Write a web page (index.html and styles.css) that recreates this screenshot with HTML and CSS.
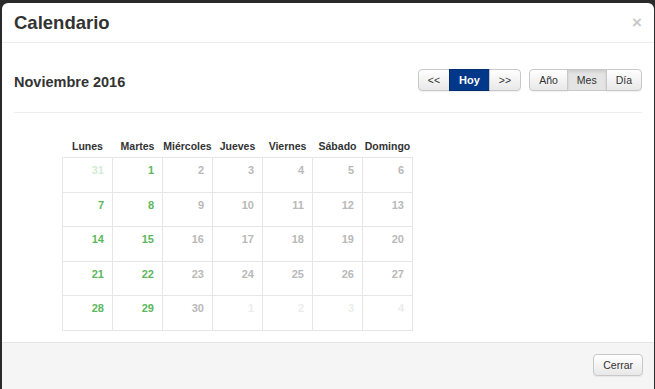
FILE: index.html
```html
<!DOCTYPE html>
<html>
<head>
  <meta charset="utf-8">
  <title>Calendario</title>
  <link rel="stylesheet" href="styles.css">
</head>
<body>
  <div class="modal">
    <header class="modal-header">
      <h3>Calendario</h3>
      <span class="close">&times;</span>
    </header>
    <div class="modal-body">
      <div class="toolbar">
        <h4>Noviembre 2016</h4>
        <div class="groups">
          <div class="btn-group">
            <button type="button" class="btn">&lt;&lt;</button>
            <button type="button" class="btn primary">Hoy</button>
            <button type="button" class="btn">&gt;&gt;</button>
          </div>
          <div class="btn-group">
            <button type="button" class="btn">Año</button>
            <button type="button" class="btn active">Mes</button>
            <button type="button" class="btn">Día</button>
          </div>
        </div>
      </div>
      <hr class="rule">
      <table class="calendar">
        <thead>
          <tr>
            <th>Lunes</th><th>Martes</th><th>Miércoles</th><th>Jueves</th><th>Viernes</th><th>Sábado</th><th>Domingo</th>
          </tr>
        </thead>
        <tbody>
          <tr>
            <td class="event out">31</td><td class="event">1</td><td>2</td><td>3</td><td>4</td><td>5</td><td>6</td>
          </tr>
          <tr>
            <td class="event">7</td><td class="event">8</td><td>9</td><td>10</td><td>11</td><td>12</td><td>13</td>
          </tr>
          <tr>
            <td class="event">14</td><td class="event">15</td><td>16</td><td>17</td><td>18</td><td>19</td><td>20</td>
          </tr>
          <tr>
            <td class="event">21</td><td class="event">22</td><td>23</td><td>24</td><td>25</td><td>26</td><td>27</td>
          </tr>
          <tr>
            <td class="event">28</td><td class="event">29</td><td>30</td><td class="out">1</td><td class="out">2</td><td class="out">3</td><td class="out">4</td>
          </tr>
        </tbody>
      </table>
    </div>
    <footer class="modal-footer">
      <button type="button" class="btn">Cerrar</button>
    </footer>
  </div>
</body>
</html>
```

FILE: styles.css
```css
body {
  margin: 0;
  height: 389px;
  overflow: hidden;
  background: #2a2a2a;
  font-family: "Liberation Sans", Arial, sans-serif;
  color: #333;
}
.modal {
  margin: 3px 1px 0 2px;
  height: 400px;
  background: #fff;
  border-radius: 6px;
  overflow: hidden;
}
.modal-header {
  height: 39px;
  padding: 0 12px;
  border-bottom: 1px solid #ececec;
  display: flex;
  align-items: center;
  justify-content: space-between;
}
h3 {
  margin: 0;
  font-size: 18.5px;
  font-weight: bold;
}
.close {
  font-size: 17px;
  font-weight: bold;
  color: #c9c9c9;
  line-height: 1;
}
.modal-body {
  height: 273px;
  padding: 26px 12px 0;
}
.toolbar {
  height: 22px;
  display: flex;
  align-items: center;
  justify-content: space-between;
}
h4 {
  margin: 4px 0 0;
  font-size: 14.5px;
  font-weight: bold;
}
.groups {
  display: flex;
  gap: 8px;
}
.btn-group {
  display: flex;
}
.btn {
  height: 22px;
  padding: 0 9px;
  font-family: inherit;
  font-size: 10.5px;
  color: #333;
  border: 1px solid #c8c8c8;
  background: linear-gradient(#fff, #e8e8e8);
  box-shadow: 0 1px 1px rgba(0, 0, 0, 0.06);
}
.btn-group .btn {
  border-radius: 0;
  margin-left: -1px;
}
.btn-group .btn:first-child {
  margin-left: 0;
  border-radius: 4px 0 0 4px;
}
.btn-group .btn:last-child {
  border-radius: 0 4px 4px 0;
}
.btn.primary {
  background: #02388a;
  border-color: #022e70;
  color: #fff;
  font-weight: bold;
  font-size: 11px;
}
.btn.active {
  background: #e4e4e4;
  box-shadow: inset 0 2px 3px rgba(0, 0, 0, 0.1);
}
.rule {
  margin: 21px 0 0;
  border: 0;
  border-top: 1px solid #eee;
}
.calendar {
  margin: 24px 0 0 48px;
  border-collapse: collapse;
  table-layout: fixed;
  width: 351px;
}
.calendar th {
  height: 15px;
  padding: 0 0 5px;
  font-size: 10.5px;
  font-weight: bold;
  text-align: center;
  vertical-align: bottom;
}
.calendar td {
  height: 34.6px;
  padding: 6px 8px 0 0;
  box-sizing: border-box;
  border: 1px solid #e6e6e6;
  text-align: right;
  vertical-align: top;
  font-size: 11px;
  font-weight: bold;
  color: #b9b9b9;
}
.calendar td.event {
  color: #5cb85c;
}
.calendar td.out {
  color: #ececec;
}
.calendar td.event.out {
  color: #d3ecd3;
}
.modal-footer {
  height: 100px;
  padding: 11px 11px 0;
  border-top: 1px solid #e5e5e5;
  background: #f5f5f5;
  text-align: right;
}
.modal-footer .btn {
  border-radius: 4px;
  padding: 0 9px;
}
```
